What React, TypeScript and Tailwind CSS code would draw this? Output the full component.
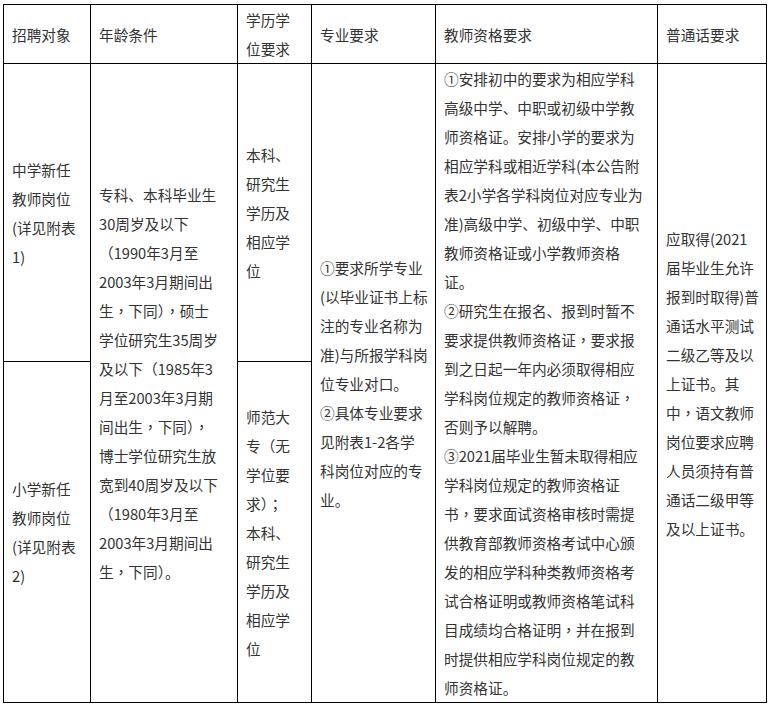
import type { ReactNode } from "react";

// The source renders full-width commas and semicolons centred in their em box,
// so those two glyphs are drawn from the TC face.
function Line({ text }: { text: string }) {
  const parts = text.split(/([，；])/);
  return (
    <span className="block">
      {parts.map((p, i) =>
        p === "，" || p === "；" ? (
          <span key={i} className="font-['Noto_Sans_CJK_TC',sans-serif]">
            {p}
          </span>
        ) : (
          p
        ),
      )}
    </span>
  );
}

interface CellProps {
  lines: string[];
  className?: string;
}

function Cell({ lines, className = "" }: CellProps) {
  return (
    <div className={`flex flex-col justify-center bg-white pl-2 whitespace-nowrap ${className}`}>
      {lines.map((l, i) => (
        <Line key={i} text={l} />
      ))}
    </div>
  );
}

const age = [
  "专科、本科毕业生",
  "30周岁及以下",
  "（1990年3月至",
  "2003年3月期间出",
  "生，下同），硕士",
  "学位研究生35周岁",
  "及以下（1985年3",
  "月至2003年3月期",
  "间出生，下同），",
  "博士学位研究生放",
  "宽到40周岁及以下",
  "（1980年3月至",
  "2003年3月期间出",
  "生，下同）。",
];

const major = [
  "①要求所学专业",
  "(以毕业证书上标",
  "注的专业名称为",
  "准)与所报学科岗",
  "位专业对口。",
  "②具体专业要求",
  "见附表1-2各学",
  "科岗位对应的专",
  "业。",
];

const cert = [
  "①安排初中的要求为相应学科",
  "高级中学、中职或初级中学教",
  "师资格证。安排小学的要求为",
  "相应学科或相近学科(本公告附",
  "表2小学各学科岗位对应专业为",
  "准)高级中学、初级中学、中职",
  "教师资格证或小学教师资格",
  "证。",
  "②研究生在报名、报到时暂不",
  "要求提供教师资格证，要求报",
  "到之日起一年内必须取得相应",
  "学科岗位规定的教师资格证，",
  "否则予以解聘。",
  "③2021届毕业生暂未取得相应",
  "学科岗位规定的教师资格证",
  "书，要求面试资格审核时需提",
  "供教育部教师资格考试中心颁",
  "发的相应学科种类教师资格考",
  "试合格证明或教师资格笔试科",
  "目成绩均合格证明，并在报到",
  "时提供相应学科岗位规定的教",
  "师资格证。",
];

const mandarin = [
  "应取得(2021",
  "届毕业生允许",
  "报到时取得)普",
  "通话水平测试",
  "二级乙等及以",
  "上证书。其",
  "中，语文教师",
  "岗位要求应聘",
  "人员须持有普",
  "通话二级甲等",
  "及以上证书。",
];

function Table({ children }: { children: ReactNode }) {
  return (
    <div className="grid w-[764px] grid-cols-[86px_146px_73px_123px_221px_108px] grid-rows-[58px_297px_340px] gap-px bg-black p-px font-['Noto_Sans_CJK_SC',sans-serif] text-[14.67px] leading-[29px] text-[#333]">
      {children}
    </div>
  );
}

export default function App() {
  return (
    <div className="min-h-[706px] bg-white pt-[4px] pl-[3px]">
      <Table>
        {/* Header */}
        <Cell lines={["招聘对象"]} className="col-start-1 row-start-1" />
        <Cell lines={["年龄条件"]} className="col-start-2 row-start-1" />
        <Cell lines={["学历学", "位要求"]} className="col-start-3 row-start-1" />
        <Cell lines={["专业要求"]} className="col-start-4 row-start-1" />
        <Cell lines={["教师资格要求"]} className="col-start-5 row-start-1" />
        <Cell lines={["普通话要求"]} className="col-start-6 row-start-1" />

        {/* Body */}
        <Cell
          lines={["中学新任", "教师岗位", "(详见附表", "1)"]}
          className="col-start-1 row-start-2"
        />
        <Cell
          lines={["小学新任", "教师岗位", "(详见附表", "2)"]}
          className="col-start-1 row-start-3"
        />
        <Cell lines={age} className="col-start-2 row-span-2 row-start-2" />
        <Cell
          lines={["本科、", "研究生", "学历及", "相应学", "位"]}
          className="col-start-3 row-start-2"
        />
        <Cell
          lines={["师范大", "专（无", "学位要", "求）；", "本科、", "研究生", "学历及", "相应学", "位"]}
          className="col-start-3 row-start-3"
        />
        <Cell lines={major} className="col-start-4 row-span-2 row-start-2" />
        <Cell lines={cert} className="col-start-5 row-span-2 row-start-2" />
        <Cell lines={mandarin} className="col-start-6 row-span-2 row-start-2" />
      </Table>
    </div>
  );
}
